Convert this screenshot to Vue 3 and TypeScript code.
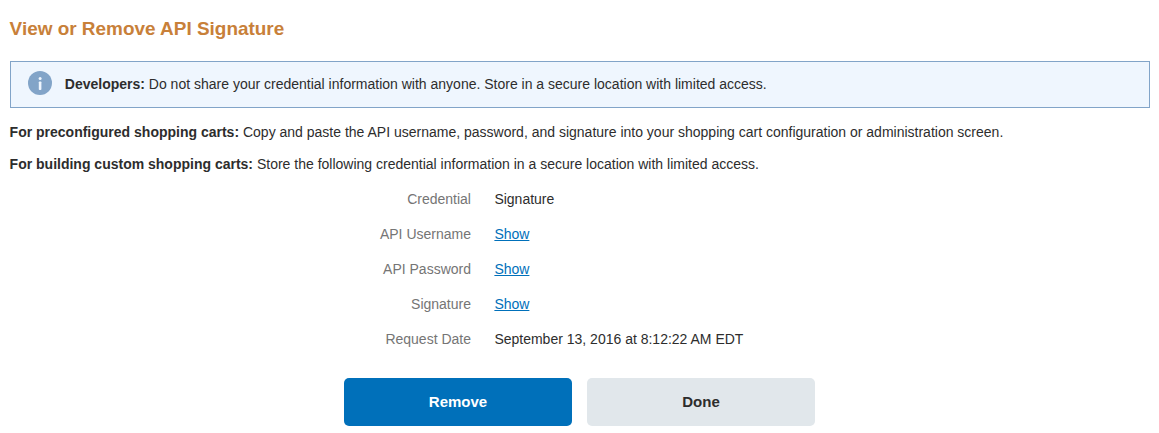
<script setup lang="ts">
interface Row { label: string; value: string; link?: boolean }
const rows: Row[] = [
  { label: 'Credential', value: 'Signature' },
  { label: 'API Username', value: 'Show', link: true },
  { label: 'API Password', value: 'Show', link: true },
  { label: 'Signature', value: 'Show', link: true },
  { label: 'Request Date', value: 'September 13, 2016 at 8:12:22 AM EDT' },
]
</script>

<template>
  <main class="page">
    <h1>View or Remove API Signature</h1>
    <div class="notice">
      <svg class="info" viewBox="0 0 24 24" width="24" height="24" aria-hidden="true">
        <circle cx="12" cy="12" r="12" fill="#82a4c8" />
        <circle cx="12.1" cy="7.5" r="1.5" fill="#eff6fe" />
        <rect x="10.8" y="10.4" width="2.6" height="8.6" rx="0.8" fill="#eff6fe" />
      </svg>
      <p><strong>Developers:</strong> Do not share your credential information with anyone. Store in a secure location with limited access.</p>
    </div>
    <p class="para"><strong>For preconfigured shopping carts:</strong> Copy and paste the API username, password, and signature into your shopping cart configuration or administration screen.</p>
    <p class="para"><strong>For building custom shopping carts:</strong> Store the following credential information in a secure location with limited access.</p>
    <dl class="details">
      <div v-for="row in rows" :key="row.label" class="row">
        <dt>{{ row.label }}</dt>
        <dd><a v-if="row.link" href="#">{{ row.value }}</a><template v-else>{{ row.value }}</template></dd>
      </div>
    </dl>
    <div class="actions">
      <button type="button" class="btn primary">Remove</button>
      <button type="button" class="btn secondary">Done</button>
    </div>
  </main>
</template>

<style>
body { background: #fff; }
</style>

<style scoped>
.page {
  box-sizing: border-box;
  height: 433px;
  padding: 17px 9.4px 0 9.6px;
  overflow: hidden;
  color: #2d2d2d;
  font: 14px/20px "Liberation Sans", Arial, sans-serif;
}
h1 {
  margin: 0;
  color: #c88039;
  font-size: 18.95px;
  line-height: 24px;
}
.notice {
  display: flex;
  box-sizing: border-box;
  height: 47px;
  margin: 20px 0 14px;
  padding: 9px 17px;
  border: 1px solid #82a4c8;
  background: #eff6fe;
}
.info { flex: none; margin-right: 13.2px; }
.notice p { margin: 3px 0 0; }
p { white-space: nowrap; }
.para { margin: 0 0 12px; }
.details { margin: 0; padding-top: 3px; }
.row { display: flex; height: 35px; }
dt { width: 461.4px; color: #757575; text-align: right; }
dd { margin: 0 0 0 23.4px; }
a { color: #0070ba; text-decoration: underline; }
.actions { display: flex; gap: 15px; padding: 14px 0 0 334.4px; }
.btn {
  width: 228px;
  height: 48px;
  padding: 0;
  border: 0;
  border-radius: 5px;
  font: bold 15px/20px "Liberation Sans", Arial, sans-serif;
}
.primary { background: #0070ba; color: #fff; }
.secondary { background: #e1e7eb; color: #2d2d2d; }
</style>
